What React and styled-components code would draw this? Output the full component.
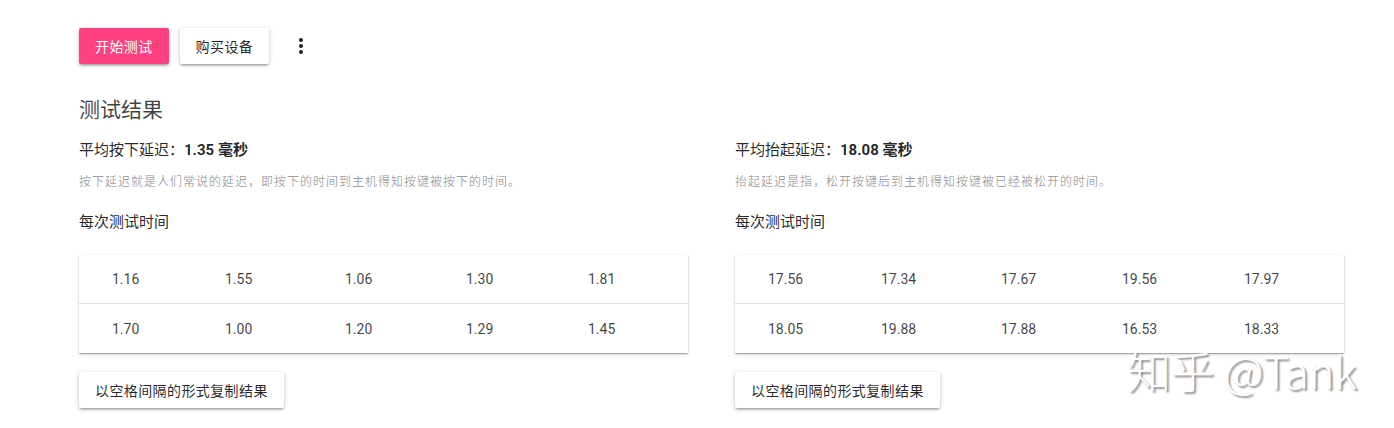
import React from "react";
import styled, { createGlobalStyle } from "styled-components";

const GlobalStyle = createGlobalStyle`
  body {
    margin: 0;
    background: #fff;
    font-family: Roboto, "Noto Sans CJK SC", sans-serif;
    color: rgba(0, 0, 0, 0.87);
  }
`;

const Page = styled.div`
  position: relative;
  padding: 28px 3px 20px 79px;
`;

const Toolbar = styled.div`
  display: flex;
  align-items: center;
  height: 36px;
`;

const Button = styled.button`
  height: 36px;
  padding: 0 16px;
  margin-right: ${(p) => p.$gap || 0}px;
  border: none;
  border-radius: 2px;
  font-family: Roboto, "Noto Sans CJK SC", sans-serif;
  font-size: 14px;
  letter-spacing: 0.4px;
  background: ${(p) => (p.$primary ? "#ff4081" : "#fff")};
  color: ${(p) => (p.$primary ? "#fff" : "rgba(0, 0, 0, 0.87)")};
  box-shadow: 0 1px 5px 0 rgba(0, 0, 0, 0.2), 0 2px 2px 0 rgba(0, 0, 0, 0.14),
    0 3px 1px -2px rgba(0, 0, 0, 0.12);
  cursor: pointer;
`;

const IconButton = styled.button`
  width: 48px;
  height: 48px;
  margin-left: 8px;
  border: none;
  background: none;
  padding: 0;
  display: flex;
  align-items: center;
  justify-content: center;
  color: rgba(0, 0, 0, 0.87);
`;

const Heading = styled.h2`
  margin: 30px 0 12px;
  font-size: 21px;
  line-height: 32px;
  font-weight: 400;
  color: rgba(0, 0, 0, 0.75);
`;

const Columns = styled.div`
  display: grid;
  grid-template-columns: 1fr 1fr;
`;

const Column = styled.div`
  display: flex;
  flex-direction: column;
  align-items: flex-start;
`;

const Stat = styled.div`
  font-size: 15px;
  line-height: 24px;
  b {
    font-weight: 700;
  }
`;

const Note = styled.div`
  margin-top: 10px;
  font-size: 12px;
  line-height: 20px;
  letter-spacing: 1px;
  color: rgba(0, 0, 0, 0.38);
`;

const Subtitle = styled.div`
  margin-top: 18px;
  font-size: 15px;
  line-height: 24px;
`;

const Card = styled.div`
  margin-top: 21px;
  width: calc(100% - 47px);
  background: #fff;
  box-shadow: 0 1px 3px 0 rgba(0, 0, 0, 0.2), 0 1px 1px 0 rgba(0, 0, 0, 0.14),
    0 2px 1px -1px rgba(0, 0, 0, 0.12);
`;

const Row = styled.div`
  display: grid;
  grid-template-columns: 113px 120px 121px 122px 1fr;
  align-items: center;
  padding-left: 33px;
  border-bottom: ${(p) => (p.$last ? "none" : "1px solid rgba(224, 224, 224, 1)")};
  height: ${(p) => (p.$last ? 49 : 48)}px;
`;

const Cell = styled.div`
  font-family: Roboto, sans-serif;
  font-size: 14px;
  color: rgba(0, 0, 0, 0.75);
`;

const CopyButton = styled(Button)`
  margin-top: 19px;
`;

const Watermark = styled.div`
  position: absolute;
  left: 1127px;
  top: 340px;
  font-family: "Noto Sans CJK SC", sans-serif;
  font-size: 44px;
  font-weight: 300;
  line-height: 60px;
  color: #fff;
  letter-spacing: -0.4px;
  text-shadow: 2px 2px 2px rgba(0, 0, 0, 0.45);
  pointer-events: none;
  white-space: nowrap;
`;

const MoreIcon = () => (
  <svg width="24" height="24" viewBox="0 0 24 24" fill="currentColor">
    <circle cx="12" cy="6" r="2" />
    <circle cx="12" cy="12" r="2" />
    <circle cx="12" cy="18" r="2" />
  </svg>
);

const results = [
  {
    label: "平均按下延迟：",
    value: "1.35 毫秒",
    note: "按下延迟就是人们常说的延迟，即按下的时间到主机得知按键被按下的时间。",
    rows: [
      ["1.16", "1.55", "1.06", "1.30", "1.81"],
      ["1.70", "1.00", "1.20", "1.29", "1.45"],
    ],
  },
  {
    label: "平均抬起延迟：",
    value: "18.08 毫秒",
    note: "抬起延迟是指，松开按键后到主机得知按键被已经被松开的时间。",
    rows: [
      ["17.56", "17.34", "17.67", "19.56", "17.97"],
      ["18.05", "19.88", "17.88", "16.53", "18.33"],
    ],
  },
];

export default function App() {
  return (
    <Page>
      <GlobalStyle />
      <Toolbar>
        <Button $primary $gap={11}>开始测试</Button>
        <Button>购买设备</Button>
        <IconButton>
          <MoreIcon />
        </IconButton>
      </Toolbar>
      <Heading>测试结果</Heading>
      <Columns>
        {results.map((r) => (
          <Column key={r.label}>
            <Stat>
              {r.label}
              <b>{r.value}</b>
            </Stat>
            <Note>{r.note}</Note>
            <Subtitle>每次测试时间</Subtitle>
            <Card>
              {r.rows.map((row, i) => (
                <Row key={i} $last={i === r.rows.length - 1}>
                  {row.map((v, j) => (
                    <Cell key={j}>{v}</Cell>
                  ))}
                </Row>
              ))}
            </Card>
            <CopyButton>以空格间隔的形式复制结果</CopyButton>
          </Column>
        ))}
      </Columns>
      <Watermark>知乎 @Tank</Watermark>
    </Page>
  );
}
